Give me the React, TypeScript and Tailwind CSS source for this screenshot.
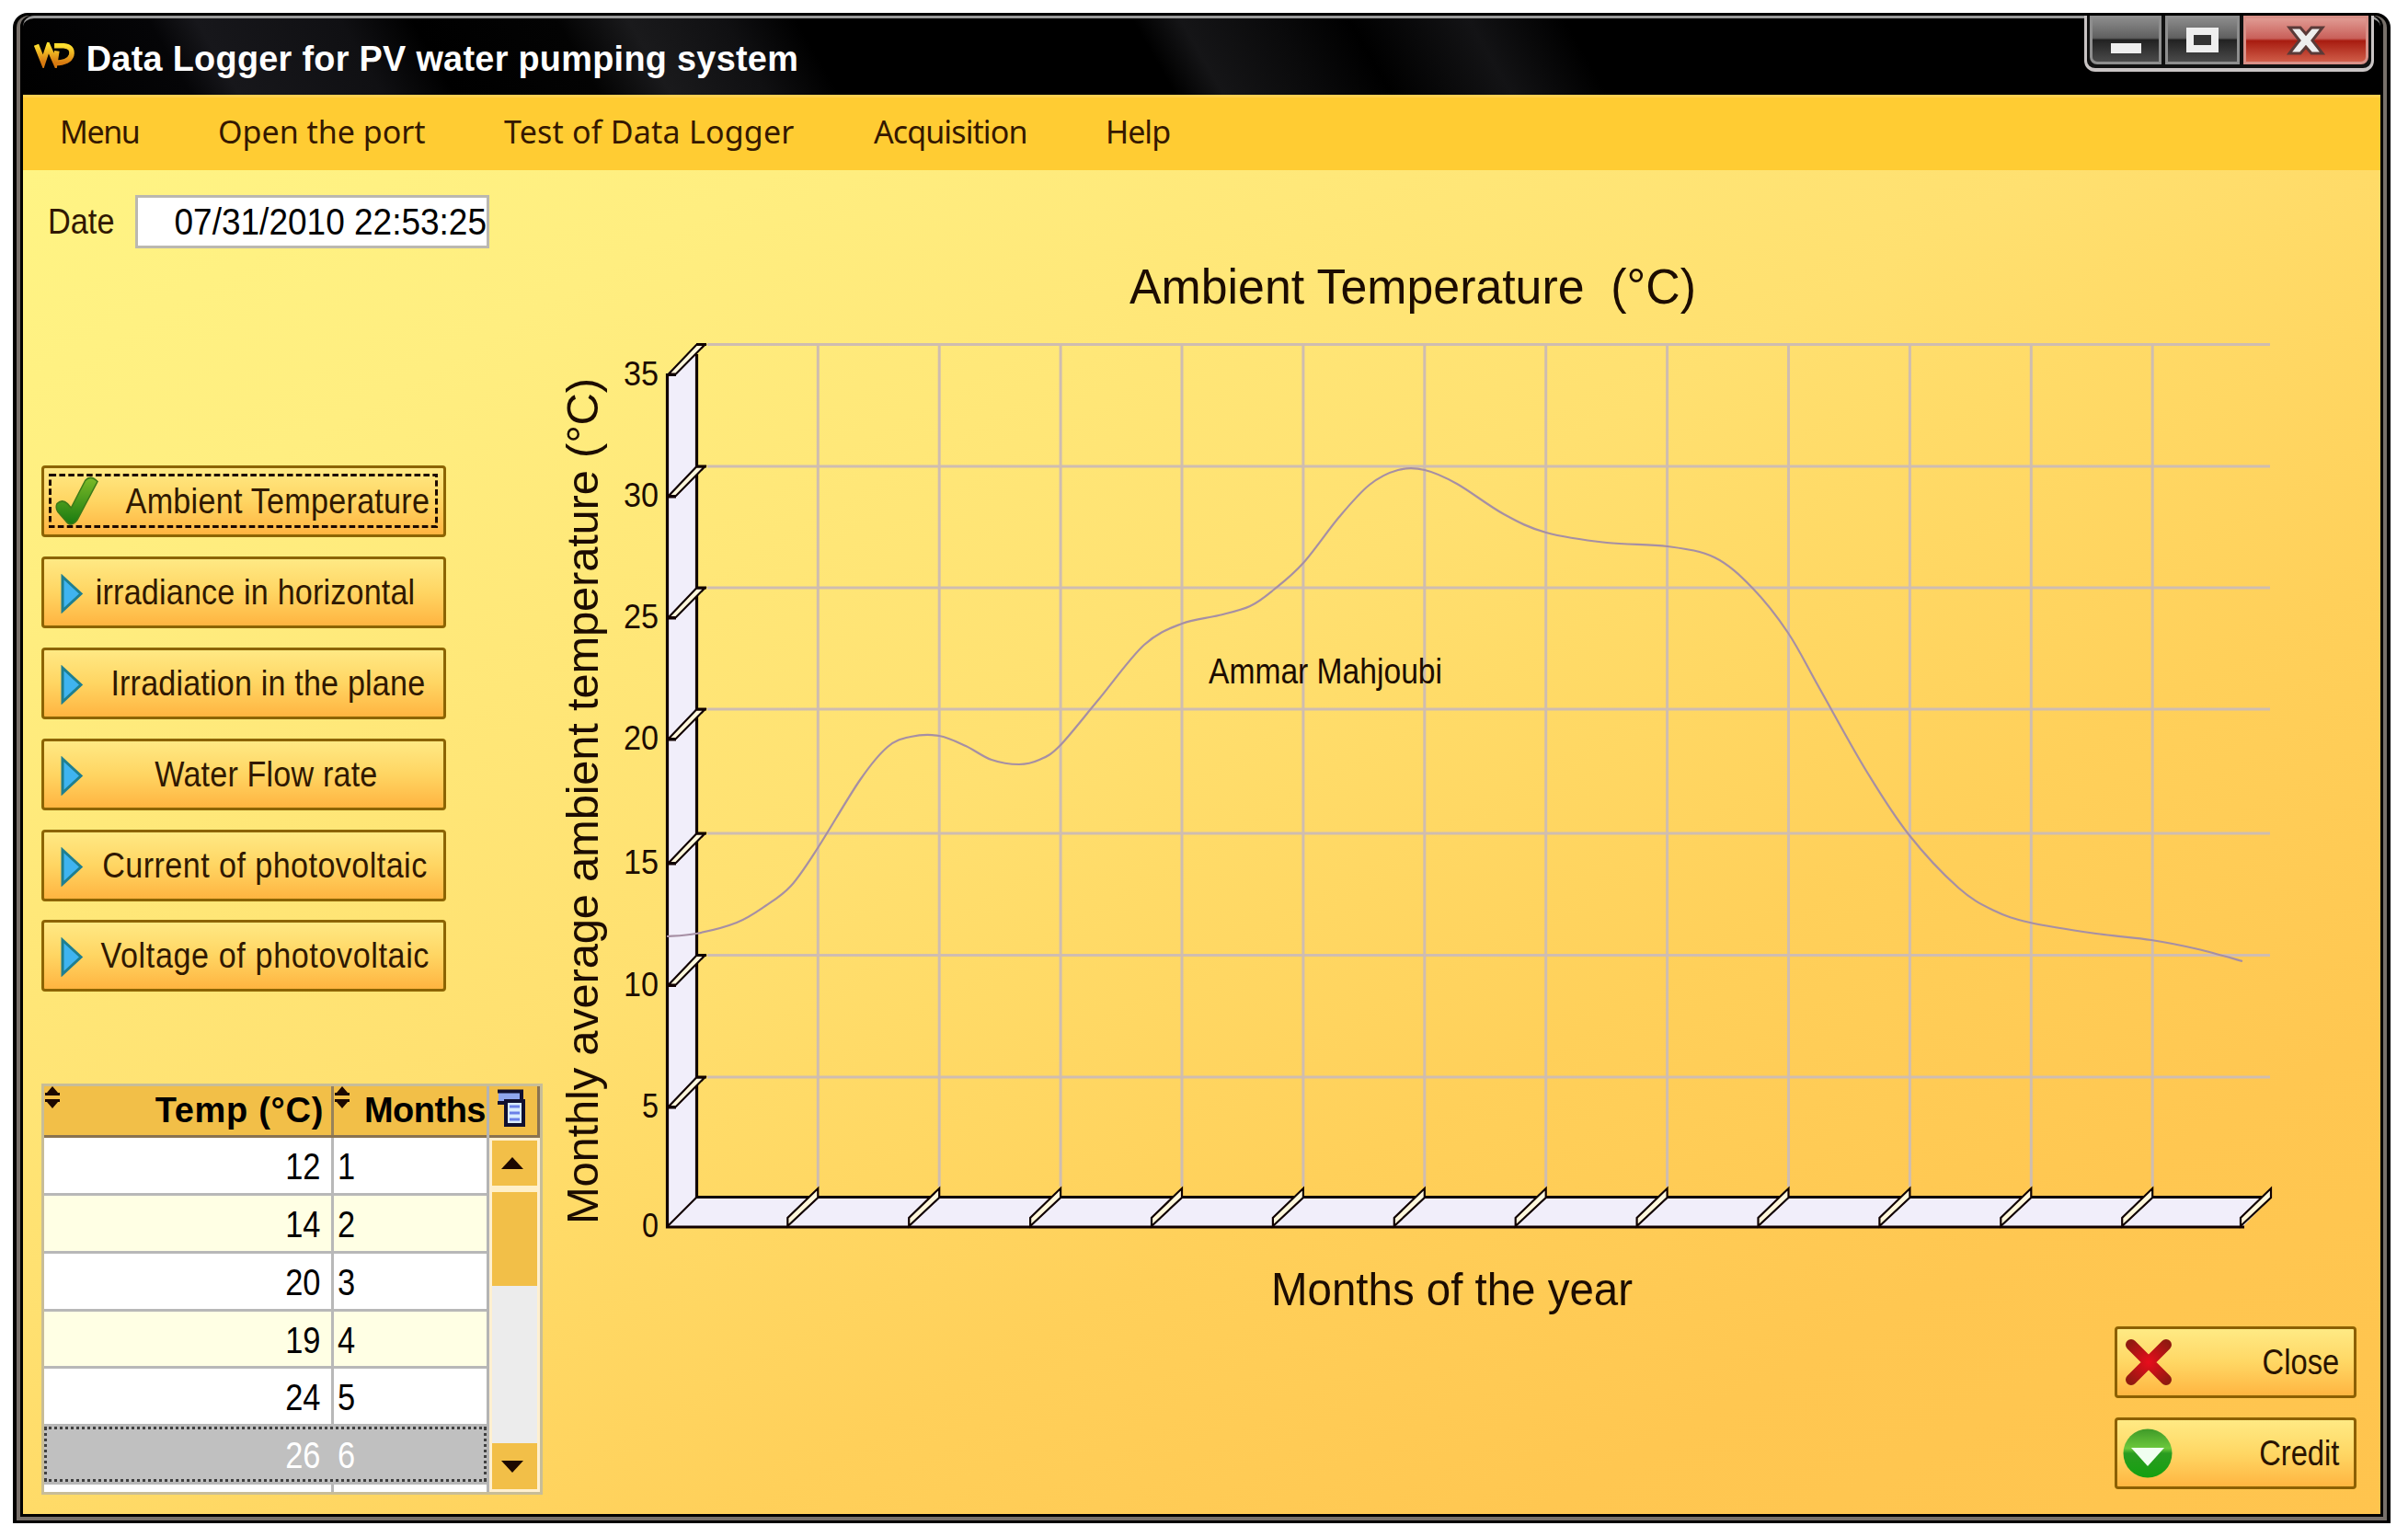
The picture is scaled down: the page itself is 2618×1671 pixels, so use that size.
import type { ReactNode } from 'react';

interface Measure {
  title: string;
  textClass: string;
  active?: boolean;
}

const menuItems = [
  { title: 'Menu', className: 'w-[172px] tracking-[-1.4px]' },
  { title: 'Open the port', className: 'w-[311px]' },
  { title: 'Test of Data Logger', className: 'w-[402px] tracking-[0.2px]' },
  { title: 'Acquisition', className: 'w-[252px] tracking-[-0.9px]' },
  { title: 'Help', className: 'w-[100px] tracking-[-1px]' },
];

const measures: Measure[] = [
  { title: 'Ambient Temperature', textClass: 'pl-[73px] tracking-[0.3px]', active: true },
  { title: 'irradiance in horizontal', textClass: 'pl-[26px] tracking-[0.2px]' },
  { title: 'Irradiation in the plane', textClass: 'pl-[52px] tracking-[0.2px]' },
  { title: 'Water Flow rate', textClass: 'pl-[48px] tracking-[0.2px]' },
  { title: 'Current of photovoltaic', textClass: 'pl-[46px] tracking-[0.5px]' },
  { title: 'Voltage of photovoltaic', textClass: 'pl-[47px] tracking-[0.7px]' },
];

const rows = [
  { temp: 12, month: 1 },
  { temp: 14, month: 2 },
  { temp: 20, month: 3 },
  { temp: 19, month: 4 },
  { temp: 24, month: 5 },
  { temp: 26, month: 6 },
];

const yTicks = [
  { label: '35', y: 374.5 },
  { label: '30', y: 507 },
  { label: '25', y: 639 },
  { label: '20', y: 771 },
  { label: '15', y: 906 },
  { label: '10', y: 1038.5 },
  { label: '5', y: 1171 },
];

const xTicks = Array.from({ length: 12 }, (_, i) => 889.3 + i * 131.9);

const curve = [
  [725, 1018], [757, 1015], [801, 1003], [832, 985], [860, 963], [889, 922], [935, 848], [965, 812], [990, 801],
  [1021, 800], [1050, 811], [1078, 826], [1108, 831], [1130, 826], [1152, 811], [1194, 761], [1244, 701],
  [1285, 678], [1325, 669], [1359, 659], [1385, 641], [1417, 612], [1456, 562], [1489, 527], [1520, 511],
  [1549, 511], [1584, 526], [1635, 559], [1681, 579], [1747, 590], [1813, 594], [1864, 606], [1905, 639],
  [1944, 688], [1978, 748], [2029, 838], [2075, 907], [2129, 965], [2168, 990], [2207, 1003], [2279, 1015],
  [2339, 1022], [2390, 1032], [2438, 1045],
];

// Catmull-Rom spline through the points, as cubic beziers
const smoothPath = ( points: number[][] ) => {
  let d = `M${points[0][0]} ${points[0][1]}`;
  for ( let i = 0; i < points.length - 1; i++ ) {
    const p0 = points[i - 1] || points[i];
    const p1 = points[i];
    const p2 = points[i + 1];
    const p3 = points[i + 2] || p2;
    d += ` C${p1[0] + (p2[0] - p0[0]) / 6} ${p1[1] + (p2[1] - p0[1]) / 6}`;
    d += ` ${p2[0] - (p3[0] - p1[0]) / 6} ${p2[1] - (p3[1] - p1[1]) / 6} ${p2[0]} ${p2[1]}`;
  }
  return d;
};


const TitleBar = () => (
  <header className="flex h-[86px] justify-between rounded-t-[12px] border-t-[3px] border-[#9a9a9a] bg-[linear-gradient(60deg,#000_0%,#050507_7%,#17171b_9%,#101013_15%,#000_18%,#030303_24%,#1a1a1c_27%,#101012_31%,#000_34%,#000_48%,#151517_50%,#0a0a0b_54%,#000_57%,#131315_62%,#000_66%)]">
    <div className="flex items-center pt-[3px] pl-[10px]">
      <svg className="-mt-[6px]" width="50" height="28" viewBox="0 0 50 30" fill="none" strokeWidth="6">
        <defs>
          <linearGradient id="logo" x1="0" y1="0" x2="0" y2="1">
            <stop offset="0" stopColor="#ffe030" />
            <stop offset="1" stopColor="#d87a10" />
          </linearGradient>
        </defs>
        <path d="M3 3 L11 23 L17 5 L25 23 L27 10" stroke="url(#logo)" />
        <path d="M24 4 H35 Q46 5 44 15 Q41 24 25 24" stroke="url(#logo)" />
      </svg>
      <h1 className="origin-left scale-x-[0.97] pl-[9px] text-[39px] leading-none font-bold tracking-[0.3px] whitespace-nowrap text-white">
        Data Logger for PV water pumping system
      </h1>
    </div>

    {/* Window controls */}
    <div className="-mt-[3px] mr-[7px] flex h-[61px] w-[315px] gap-[4px] rounded-b-[12px] border-x-[3px] border-b-[4px] border-[#c9c4c4] bg-[#111] px-[3px] pb-[3px]">
      <div className="flex h-[53px] w-[79px] items-end justify-center rounded-bl-[8px] border-[3px] border-[#8e8e8e] bg-[linear-gradient(#8a8a8a,#606060_45%,#222_50%,#4a4a4a)] pb-[9px]">
        <div className="h-[11px] w-[33px] bg-[#eee]"></div>
      </div>
      <div className="flex h-[53px] w-[82px] items-center justify-center border-[3px] border-[#8e8e8e] bg-[linear-gradient(#8a8a8a,#606060_45%,#222_50%,#4a4a4a)]">
        <div className="h-[27px] w-[35px] border-[8px] border-[#eee] bg-[#333]"></div>
      </div>
      <div className="flex h-[53px] w-[137px] items-center justify-center rounded-br-[8px] border-[3px] border-[#d89088] bg-[linear-gradient(#e09a92,#c9605a_46%,#a81c10_52%,#cf5c48)]">
        <svg width="44" height="36" viewBox="0 0 44 36">
          <path d="M4 4 H16 L22 11 L28 4 H40 L29 18 L40 32 H28 L22 25 L16 32 H4 L15 18 Z" fill="#eee" stroke="#5a3a38" strokeWidth="3" />
        </svg>
      </div>
    </div>
  </header>
);


const CheckIcon = () => (
  <svg className="absolute top-[9px] left-[12px]" width="48" height="55" viewBox="0 0 50 50" preserveAspectRatio="none">
    <defs>
      <linearGradient id="check" x1="0" y1="0" x2="0" y2="1">
        <stop offset="0" stopColor="#7cba28" />
        <stop offset="1" stopColor="#187a10" />
      </linearGradient>
    </defs>
    <path d="M2 27 Q8 22 14 27 L18 31 L34 4 Q40 -2 48 5 L25 43 Q18 51 12 44 L3 35 Q0 31 2 27 Z" fill="url(#check)" stroke="#3c7a18" strokeWidth="1.5" />
  </svg>
);

const PlayIcon = () => (
  <svg className="absolute top-[16px] left-[18px]" width="26" height="43" viewBox="0 0 26 43">
    <path d="M2 3 L22 21.5 L2 40 Z" fill="#3fb4f0" stroke="#1f7f90" strokeWidth="3" />
  </svg>
);

const MeasureButton = ({ title, textClass, active }: Measure) => (
  <button className="relative flex h-[78px] w-[440px] items-center justify-center rounded-[4px] border-[3px] border-[#8c6400] bg-linear-to-b from-[#ffe984] via-[#ffd562] to-[#ffb440]">
    {
      active && (
        <svg className="absolute top-[6px] left-[5px]" width="424" height="60">
          <rect x="1.5" y="1.5" width="420" height="56" fill="none" stroke="#1c0800" strokeWidth="3" strokeDasharray="6.6 3.3" />
        </svg>
      )
    }
    { active ? <CheckIcon /> : <PlayIcon /> }
    <span className={`${textClass} -mx-6 -mt-[1px] text-[39px] leading-none whitespace-nowrap text-[#301800]`}>
      <span className="inline-block scale-x-[0.875]">{ title }</span>
    </span>
  </button>
);


const SortIcon = () => (
  <svg className="absolute top-0 left-0" width="18" height="24" viewBox="0 0 18 24" fill="#1c0800">
    <path d="M9 0 L15 7 H17 V10 H1 V7 H3 Z" />
    <path d="M1 14 H17 V17 H15 L9 24 L3 17 H1 Z" />
  </svg>
);

const DataTable = () => (
  <div className="flex h-[447px] w-[545px] border-[3px] border-[#c8bd98] bg-white">
    <div className="flex w-[484px] flex-col overflow-hidden border-r-[3px] border-[#b4b4b4]">
      <div className="flex h-[56px] shrink-0 border-b-[3px] border-[#8a7350] bg-[#f2bf48] text-[38px] leading-[52px] font-bold whitespace-nowrap text-black">
        <div className="relative w-[315px] border-r-[3px] border-[#98825a] pr-[8px] text-right tracking-[0.7px]">
          <SortIcon />
          Temp (°C)
        </div>
        <div className="relative flex-1 pr-[1px] text-right tracking-[-0.5px]">
          <SortIcon />
          Months
        </div>
      </div>
      {
        rows.map( ( row, i ) => (
          <div
            key={row.month}
            className={`relative flex h-[62.7px] shrink-0 border-b-[3px] border-[#b8b8b8] text-[40px] leading-[63px] ${ i === 5 ? 'bg-[#c0c0c0] text-white' : i % 2 ? 'bg-[#ffffe4] text-black' : 'bg-white text-black' }`}
          >
            <div className={`w-[315px] border-r-[3px] pr-[12px] text-right ${ i === 5 ? 'border-[#c0c0c0]' : 'border-[#b8b8b8]' }`}>
              <span className="inline-block origin-right scale-x-[0.86]">{ row.temp }</span>
            </div>
            <div className="pl-[4px]">
              <span className="inline-block origin-left scale-x-[0.86]">{ row.month }</span>
            </div>
            { i === 5 && <div className="absolute inset-0 border-[3px] border-dotted border-[#404040]"></div> }
          </div>
        ) )
      }
      <div className="flex-1 pl-[312px]">
        <div className="h-full w-[3px] bg-[#b8b8b8]"></div>
      </div>
    </div>

    {/* Scrollbar */}
    <div className="flex flex-1 flex-col bg-[#ececec]">
      <div className="flex h-[56px] shrink-0 items-center border-r-[3px] border-b-[3px] border-[#8a7350] bg-[#f2bf48] pb-[6px] pl-[9px]">
        <svg width="32" height="42" viewBox="0 0 32 42">
          <rect x="1" y="2" width="26" height="13" fill="#8fa6ee" />
          <path d="M0 2.5 H26 V12 M0 15 H9" fill="none" stroke="#101030" strokeWidth="4" />
          <rect x="9" y="13" width="19" height="26" fill="#d8ecff" stroke="#101030" strokeWidth="4" />
          <path d="M13 19 H24 M13 26 H24 M13 33 H24" stroke="#6a80e8" strokeWidth="3" />
        </svg>
      </div>
      <div className="flex flex-1 flex-col border-[3px] border-[#fff0d0]">
        <div className="flex h-[49px] items-center justify-center bg-[#f2bf48] pr-[5px]">
          <div className="border-x-[12px] border-b-[13px] border-x-transparent border-b-[#1c0800]"></div>
        </div>
        <div className="h-[7px] bg-[#fff0c8]"></div>
        <div className="h-[102px] bg-[#f2bf48]"></div>
        <div className="flex-1"></div>
        <div className="flex h-[50px] items-center justify-center bg-[#f2bf48] pr-[5px]">
          <div className="border-x-[12px] border-t-[13px] border-x-transparent border-t-[#1c0800]"></div>
        </div>
      </div>
    </div>
  </div>
);


const Chart = () => (
  <svg width="1990" height="1257" viewBox="599 185 1990 1257" className="shrink-0 fill-[#1c0c00]">
    {/* Grid */}
    <g stroke="#cfbdb0" strokeWidth="3">
      { yTicks.map( t => <path key={t.y} d={`M769 ${t.y} H2468`} /> ) }
      { xTicks.map( x => <path key={x} d={`M${x} 374 V1290`} /> ) }
    </g>

    {/* Axis walls */}
    <path d="M725 407 L757.5 375 V1301 H2470 L2438 1334 H725 Z" fill="#f1eefa" />
    <path d="M725.5 406 V1334 H2440 M757.5 385 V1301.5 H2462" fill="none" stroke="#100000" strokeWidth="3.2" />
    <path d="M726 1333 L757 1302" stroke="#100000" strokeWidth="2.2" />
    {
      yTicks.map( t => (
        <g key={t.label}>
          <path d={`M727 ${t.y + 32} L757 ${t.y + 0.5} H766 L735 ${t.y + 32} Z`} fill="#fff8dc" stroke="#100000" strokeWidth="2.2" />
          <path d={`M725 ${t.y + 33} H735 M757 ${t.y} H768`} stroke="#100000" strokeWidth="3" />
          <text x="716" y={t.y + 44} fontSize="36" textAnchor="end" textLength={t.label.length === 2 ? 38 : 18} lengthAdjust="spacingAndGlyphs">{ t.label }</text>
        </g>
      ) )
    }
    <text x="716" y="1345" fontSize="36" textAnchor="end" textLength="18" lengthAdjust="spacingAndGlyphs">0</text>
    {
      [...xTicks, 2469].map( x => (
        <path key={x} d={`M${x - 33} 1333 V1324 L${x} 1292 V1302 Z`} fill="#fff8dc" stroke="#100000" strokeWidth="2.2" />
      ) )
    }

    <path d={smoothPath( curve )} fill="none" stroke="#a68fa4" strokeWidth="2.2" />

    <text x="1228" y="330" fontSize="53" textLength="616" lengthAdjust="spacingAndGlyphs" xmlSpace="preserve">Ambient Temperature  (°C)</text>
    <text x="1314" y="743" fontSize="38" textLength="254" lengthAdjust="spacingAndGlyphs">Ammar Mahjoubi</text>
    <text x="1382" y="1419" fontSize="50" textLength="393" lengthAdjust="spacingAndGlyphs">Months of the year</text>
    <text transform="translate(650 1331) rotate(-90)" fontSize="49" textLength="920">Monthly average ambient temperature (°C)</text>
  </svg>
);


const ActionButton = ({ title, children }: { title: string; children: ReactNode }) => (
  <button className="flex h-[78px] w-[263px] items-center justify-between rounded-[4px] border-[3px] border-[#8c6000] bg-linear-to-b from-[#ffea84] via-[#ffd764] to-[#ffb540] pr-[16px] pl-[6px]">
    { children }
    <span className="origin-right scale-x-[0.86] text-[38px] leading-none text-[#2a1400]">{ title }</span>
  </button>
);


export default function App() {
  return (
    <div className="h-[1671px] w-[2618px] bg-white pt-[14px] pl-[14px] font-['Liberation_Sans',Arial,sans-serif]">
      <div className="h-[1642px] w-[2585px] rounded-t-[16px] bg-black p-[4px] pt-[3px] pb-[3px]">
        <div className="h-[1636px] rounded-t-[13px] bg-[#77706a] px-[4px] pb-[4px]">
          <div className="h-[1632px] rounded-t-[12px] bg-black px-[3px] pb-[3px]">
            <TitleBar />

            <nav className="flex h-[82px] items-center border-t-[3px] border-[#ffd050] bg-[#ffcc33] pb-[5px] pl-[40px] font-['Noto_Sans',sans-serif] text-[34px] whitespace-nowrap text-[#351800]">
              {
                menuItems.map( item => (
                  <div key={item.title} className={item.className}>{ item.title }</div>
                ) )
              }
            </nav>

            <main className="flex h-[1461px] bg-[linear-gradient(to_bottom_right,#fff484_0%,#ffee80_16%,#ffe070_43%,#ffdb68_50%,#ffd05a_65%,#ffc751_82%,#ffc44e_100%)]">
              <aside className="flex w-[574px] shrink-0 flex-col pl-[20px]">
                <div className="mt-[27px] flex h-[58px] items-center pl-[7px]">
                  <label className="w-[95px] text-[39px] text-[#301800]">
                    <span className="inline-block origin-left scale-x-[0.88]">Date</span>
                  </label>
                  <div className="flex h-[58px] w-[385px] items-center justify-end border-[3px] border-[#bbb8b0] bg-white text-[40px] whitespace-nowrap text-black">
                    <span className="origin-right scale-x-[0.925]">07/31/2010 22:53:25</span>
                  </div>
                </div>

                <div className="mt-[236px] flex flex-col gap-[20.9px]">
                  { measures.map( m => <MeasureButton key={m.title} {...m} /> ) }
                </div>

                <div className="mt-[100px]">
                  <DataTable />
                </div>
              </aside>

              <section className="flex w-[1990px] flex-col">
                <Chart />
                <div className="flex flex-col items-end gap-[21px] pr-[27px]">
                  <ActionButton title="Close">
                    <svg width="56" height="56" viewBox="0 0 56 56" strokeLinecap="round">
                      <defs>
                        <radialGradient id="cross" gradientUnits="userSpaceOnUse" cx="28" cy="28" r="30">
                          <stop offset="0" stopColor="#e80c1c" />
                          <stop offset="1" stopColor="#8f1a10" />
                        </radialGradient>
                      </defs>
                      <path d="M9 9 L47 47 M47 9 L9 47" stroke="url(#cross)" strokeWidth="12" />
                    </svg>
                  </ActionButton>
                  <ActionButton title="Credit">
                    <svg width="54" height="54" viewBox="0 0 54 54">
                      <defs>
                        <linearGradient id="ball" x1="0" y1="0" x2="0" y2="1">
                          <stop offset="0" stopColor="#3f9a28" />
                          <stop offset="0.4" stopColor="#6cc83c" />
                          <stop offset="0.5" stopColor="#2a9c20" />
                          <stop offset="1" stopColor="#14a010" />
                        </linearGradient>
                      </defs>
                      <circle cx="27" cy="27" r="26.5" fill="url(#ball)" />
                      <path d="M9 21 H45 L27 41 Z" fill="#f0fff0" />
                    </svg>
                  </ActionButton>
                </div>
              </section>
            </main>
          </div>
        </div>
      </div>
    </div>
  );
}
